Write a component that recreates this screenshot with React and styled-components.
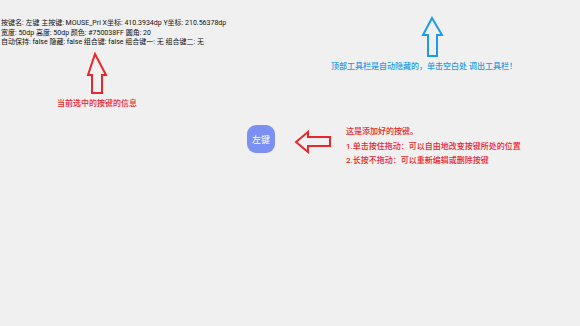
import React from 'react';
import styled, { createGlobalStyle } from 'styled-components';

const GlobalStyle = createGlobalStyle`
  html, body {
    margin: 0;
    padding: 0;
    background: #f0f0f0;
  }
  body {
    font-family: Roboto, "Noto Sans CJK SC", sans-serif;
  }
`;

const RED = '#e8262c';
const BLUE = '#1e9be6';

const Screen = styled.div`
  position: relative;
  width: 580px;
  height: 326px;
  background: #f0f0f0;
  overflow: hidden;
`;

const InfoPanel = styled.div`
  padding: 19px 0 0 1px;
  font-size: 7px;
  line-height: 9.5px;
  color: #111;
  white-space: nowrap;
`;

const InfoLine = styled.div``;

// guide overlays placed on the screen canvas
const Callout = styled.div`
  position: absolute;
  left: ${({ $x }) => $x}px;
  top: ${({ $y }) => $y}px;
  display: flex;
  flex-direction: column;
  align-items: ${({ $align }) => $align || 'center'};
  gap: ${({ $gap }) => $gap || 0}px;
`;

const KeyRow = styled.div`
  position: absolute;
  left: ${({ $x }) => $x}px;
  top: ${({ $y }) => $y}px;
  display: flex;
  align-items: flex-start;
`;

const HintText = styled.div`
  font-size: 8px;
  line-height: ${({ $lh }) => $lh || 10}px;
  font-weight: 500;
  color: ${({ $color }) => $color};
  white-space: nowrap;
`;

const HintLine = styled.div``;

const ArrowSvg = styled.svg`
  display: block;
  flex-shrink: 0;
  margin: ${({ $m }) => $m || '0'};
`;

const KeyButton = styled.button`
  width: 28px;
  height: 28px;
  border: none;
  border-radius: 9px;
  background: #7b90f2;
  color: #fff;
  font-family: Roboto, "Noto Sans CJK SC", sans-serif;
  font-size: 9px;
  padding: 0;
  display: flex;
  align-items: center;
  justify-content: center;
  flex-shrink: 0;
`;

const OutlineArrow = ({ w, h, points, color, m }) => (
  <ArrowSvg width={w} height={h} viewBox={`0 0 ${w} ${h}`} $m={m}>
    <polygon points={points} fill="none" stroke={color} strokeWidth="2" />
  </ArrowSvg>
);

const App = () => {
  return (
    <>
      <GlobalStyle />
      <Screen>
        <InfoPanel>
          <InfoLine>按键名: 左键 主按键: MOUSE_Pri X坐标: 410.3934dp Y坐标: 210.56378dp</InfoLine>
          <InfoLine>宽度: 50dp 高度: 50dp 颜色: #750038FF 圆角: 20</InfoLine>
          <InfoLine>自动保持: false 隐藏: false 组合键: false 组合键一: 无 组合键二: 无</InfoLine>
        </InfoPanel>

        <Callout $x={57} $y={52} $gap={3}>
          <OutlineArrow w={22} h={44} color={RED} points="9,2 20,23 16,23 16,41 6,41 6,23 2,23" />
          <HintText $color={RED}>当前选中的按键的信息</HintText>
        </Callout>

        <KeyRow $x={247} $y={125}>
          <KeyButton>左键</KeyButton>
          <OutlineArrow
            w={38}
            h={24}
            m="5px 14px 0 19px"
            color={RED}
            points="2,12 14,2 14,7 36,7 36,16 14,16 14,22"
          />
          <HintText $lh={14.5} $color={RED}>
            <HintLine>这是添加好的按键。</HintLine>
            <HintLine>1.单击按住拖动：可以自由地改变按键所处的位置</HintLine>
            <HintLine>2.长按不拖动：可以重新编辑或删除按键</HintLine>
          </HintText>
        </KeyRow>

        <Callout $x={331} $y={16} $gap={2} $align="flex-start">
          <OutlineArrow
            w={24}
            h={44}
            m="0 0 0 90px"
            color={BLUE}
            points="11,2 21,19 16,19 16,40 7,40 7,19 2,19"
          />
          <HintText $color={BLUE}>顶部工具栏是自动隐藏的，单击空白处 调出工具栏！</HintText>
        </Callout>
      </Screen>
    </>
  );
};

export default App;
